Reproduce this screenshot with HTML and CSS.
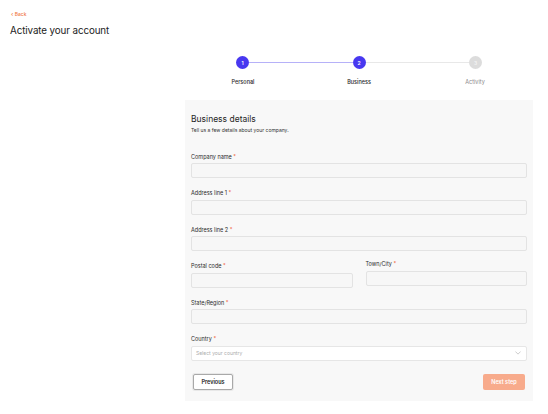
FILE: index.html
```html
<!DOCTYPE html>
<html lang="en">
<head>
<meta charset="utf-8">
<title>Activate your account</title>
<link rel="stylesheet" href="styles.css">
</head>
<body>
<div class="page">
  <header class="page-head">
    <a class="back" href="#"><span class="back-arrow">&lsaquo;</span> Back</a>
    <h1 class="title">Activate your account</h1>
  </header>
  <main class="main">
    <div class="stepper">
      <div class="track">
        <span class="dot dot-active">1</span>
        <span class="line line-done"></span>
        <span class="dot dot-active">2</span>
        <span class="line"></span>
        <span class="dot dot-todo">3</span>
      </div>
      <div class="step-labels">
        <span class="step-label">Personal</span>
        <span class="step-label">Business</span>
        <span class="step-label step-label-todo">Activity</span>
      </div>
    </div>
    <section class="card">
      <h2 class="card-title">Business details</h2>
      <p class="card-sub">Tell us a few details about your company.</p>
      <form class="form">
        <div class="field">
          <label class="label">Company name <span class="req">*</span></label>
          <input class="input" type="text">
        </div>
        <div class="field">
          <label class="label">Address line 1 <span class="req">*</span></label>
          <input class="input" type="text">
        </div>
        <div class="field">
          <label class="label">Address line 2 <span class="req">*</span></label>
          <input class="input" type="text">
        </div>
        <div class="row">
          <div class="field">
            <label class="label">Postal code <span class="req">*</span></label>
            <input class="input" type="text">
          </div>
          <div class="field field-up">
            <label class="label">Town/City <span class="req">*</span></label>
            <input class="input" type="text">
          </div>
        </div>
        <div class="field">
          <label class="label">State/Region <span class="req">*</span></label>
          <input class="input" type="text">
        </div>
        <div class="field">
          <label class="label">Country <span class="req">*</span></label>
          <div class="select">
            <span class="placeholder">Select your country</span>
            <svg class="chev" viewBox="0 0 8 5" width="6" height="4"><path d="M0.5 0.5 L4 4 L7.5 0.5" fill="none" stroke="#b5b5b5" stroke-width="0.9"/></svg>
          </div>
        </div>
        <div class="actions">
          <button type="button" class="btn btn-prev">Previous</button>
          <button type="button" class="btn btn-next">Next step</button>
        </div>
      </form>
    </section>
  </main>
</div>
</body>
</html>
```

FILE: styles.css
```css
* { box-sizing: border-box; }
html, body { margin: 0; padding: 0; background: #fff; }
body {
  font-family: Inter, "Noto Sans", "Liberation Sans", sans-serif;
  color: #1f1f1f;
}
.page { width: 548px; min-height: 414px; }
.page-head { padding: 10px 0 0 10px; }
.back {
  display: block;
  font-size: 5px;
  line-height: 7px;
  color: #f07a45;
  text-decoration: none;
  font-weight: 500;
  padding-left: 1px;
}
.back-arrow { font-size: 6px; }
.title {
  margin: 7px 0 0;
  font-size: 9.8px;
  line-height: 12px;
  font-weight: 400;
  letter-spacing: -0.1px;
  color: #222;
}
.main {
  margin: 19px 0 0 185px;
  width: 348px;
}
.track {
  display: flex;
  align-items: center;
  padding: 0 51px;
  height: 13px;
}
.dot {
  width: 13px;
  height: 13px;
  border-radius: 50%;
  flex: none;
  display: flex;
  align-items: center;
  justify-content: center;
  font-size: 5px;
  font-weight: 600;
  color: #fff;
}
.dot-active { background: #4838f0; }
.dot-todo { background: #dcdcdc; color: #f4f4f4; }
.line { flex: 1; height: 1px; background: #e8e8e8; }
.line-done { background: #b6b1f8; }
.step-labels {
  display: grid;
  grid-template-columns: repeat(3, 1fr);
  margin-top: 10px;
}
.step-label {
  text-align: center;
  font-size: 5.5px;
  line-height: 7px;
  font-weight: 500;
  color: #2a2a2a;
}
.step-label-todo { color: #8a8a8a; font-weight: 400; }
.card {
  margin-top: 14px;
  background: #f8f8f8;
  padding: 14px 6px 11px;
}
.card-title {
  margin: 0;
  font-size: 8.5px;
  line-height: 11px;
  font-weight: 400;
  color: #1f1f1f;
}
.card-sub {
  margin: 1.5px 0 0;
  font-size: 5px;
  line-height: 7px;
  color: #333;
}
.form {
  margin-top: 20px;
  display: flex;
  flex-direction: column;
  gap: 12px;
}
.field { display: flex; flex-direction: column; gap: 2.5px; }
.field-up { margin-top: -2px; }
.row {
  display: grid;
  grid-template-columns: 1fr 1fr;
  column-gap: 13px;
  align-items: start;
}
.label {
  font-size: 5.5px;
  line-height: 7px;
  color: #2b2b2b;
}
.req { color: #f0643a; }
.input {
  height: 15px;
  width: 100%;
  background: #f7f7f7;
  border: 1px solid #e3e3e3;
  border-radius: 2px;
  font: inherit;
  margin: 0;
}
.select {
  height: 15px;
  background: #fff;
  border: 1px solid #e6e6e6;
  border-radius: 2px;
  display: flex;
  align-items: center;
  justify-content: space-between;
  padding: 0 5px 0 4px;
}
.placeholder { font-size: 5px; color: #acacac; }
.actions {
  display: flex;
  justify-content: space-between;
  margin-top: 1px;
  padding: 0 2px;
}
.btn {
  font-family: inherit;
  font-size: 5.5px;
  font-weight: 600;
  height: 16px;
  border-radius: 2px;
  margin: 0;
  cursor: pointer;
}
.btn-prev {
  width: 40px;
  background: #fff;
  color: #222;
  border: 1px solid #a9a9a9;
  box-shadow: 0 0 0 1px #e8e8e8;
}
.btn-next {
  width: 42px;
  background: #f8ab8c;
  color: #fff;
  border: none;
}
```
